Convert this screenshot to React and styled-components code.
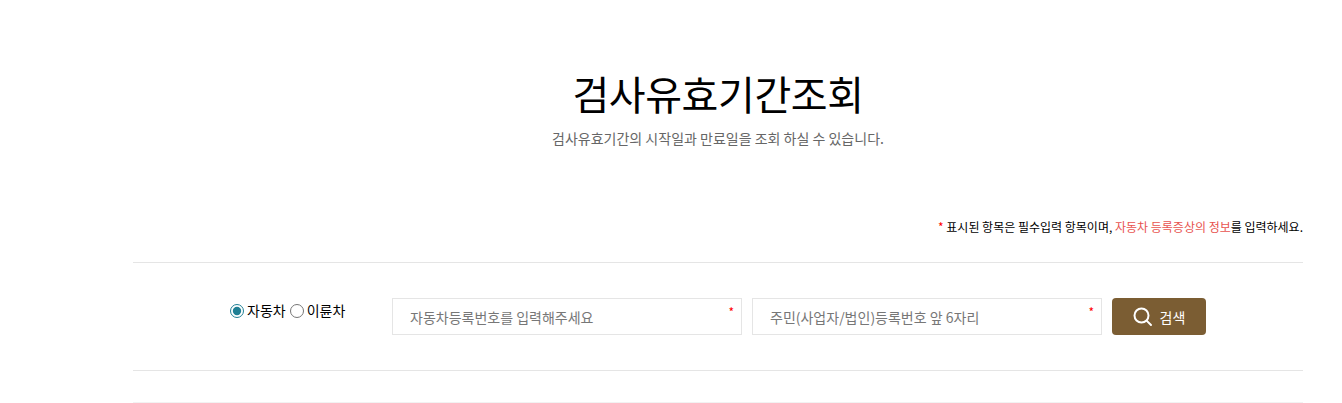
import React from "react";
import styled, { createGlobalStyle } from "styled-components";

const GlobalStyle = createGlobalStyle`
  html, body {
    margin: 0;
    padding: 0;
    background: #fff;
    font-family: "Noto Sans CJK KR", "Noto Sans", sans-serif;
    overflow: hidden;
  }
`;

const App = () => {
  return (
    <>
      <GlobalStyle />
      <Page>
        <Heading>
          <Title>검사유효기간조회</Title>
          <SubTitle>검사유효기간의 시작일과 만료일을 조회 하실 수 있습니다.</SubTitle>
        </Heading>
        <Notice>
          <Red>*</Red> 표시된 항목은 필수입력 항목이며, <Pink>자동차 등록증상의 정보</Pink>를 입력하세요.
        </Notice>
        <SearchRow>
          <RadioGroup>
            <Radio type="radio" name="kind" defaultChecked />
            <RadioLabel>자동차</RadioLabel>
            <Radio type="radio" name="kind" />
            <RadioLabel>이륜차</RadioLabel>
          </RadioGroup>
          <FieldBox>
            <Field placeholder="자동차등록번호를 입력해주세요" />
            <Star>*</Star>
          </FieldBox>
          <FieldBox>
            <Field placeholder="주민(사업자/법인)등록번호 앞 6자리" />
            <Star>*</Star>
          </FieldBox>
          <SearchBtn>
            <svg width="20" height="20" viewBox="0 0 20 20" fill="none" stroke="#fff" strokeWidth="2" strokeLinecap="round">
              <circle cx="8.5" cy="8.5" r="7" />
              <path d="M13.6 13.6 L18 18" />
            </svg>
            검색
          </SearchBtn>
        </SearchRow>
        <LastLine />
      </Page>
    </>
  );
};

export default App;

const Page = styled.div`
  width: 1170px;
  margin-left: 133px;
`;

const Heading = styled.div`
  padding-top: 63px;
  text-align: center;
  height: 149px;
  box-sizing: content-box;
`;

const Title = styled.h1`
  margin: 0;
  font-size: 40px;
  font-weight: 400;
  line-height: 60px;
  color: #000;
  letter-spacing: -0.4px;
  margin-left: 0;
  transform: none;
  padding-right: 0;
`;

const SubTitle = styled.p`
  margin: 0;
  font-size: 14px;
  line-height: 30px;
  color: #666;
`;

const Notice = styled.p`
  margin: 0;
  height: 50px;
  line-height: 30px;
  font-size: 12px;
  color: #000;
  text-align: right;
`;

const Red = styled.span`
  color: #f00;
`;

const Pink = styled.span`
  color: #e8534f;
`;

const SearchRow = styled.div`
  display: flex;
  align-items: flex-start;
  height: 107px;
  padding-top: 35px;
  box-sizing: border-box;
  border-top: 1px solid #e5e5e5;
  border-bottom: 1px solid #e5e5e5;
  height: 109px;
`;

const RadioGroup = styled.div`
  display: flex;
  align-items: center;
  width: 259px;
  height: 24px;
  padding-left: 97px;
  box-sizing: border-box;
  font-size: 14px;
  color: #000;
`;

const Radio = styled.input`
  width: 14px;
  height: 14px;
  margin: 1px 3px 0 0;
  accent-color: #1f7f94;
`;

const RadioLabel = styled.span`
  margin-right: 4px;
  line-height: 20px;
`;

const FieldBox = styled.div`
  position: relative;
  width: 350px;
  height: 37px;
  margin-right: 10px;
`;

const Field = styled.input`
  width: 100%;
  height: 100%;
  box-sizing: border-box;
  border: 1px solid #e5e5e5;
  padding: 0 17px;
  font-family: inherit;
  font-size: 14px;
  outline: none;
  &::placeholder {
    color: #777;
    opacity: 1;
  }
`;

const Star = styled.span`
  position: absolute;
  top: 5px;
  right: 8px;
  font-size: 12px;
  line-height: 18px;
  color: #f00;
`;

const SearchBtn = styled.button`
  display: flex;
  align-items: center;
  justify-content: center;
  gap: 7px;
  width: 94px;
  height: 37px;
  border: 0;
  border-radius: 4px;
  background: #7b5d33;
  color: #fff;
  font-family: inherit;
  font-size: 14px;
`;

const LastLine = styled.div`
  margin-top: 31px;
  height: 1px;
  background: #f2f2f2;
`;
